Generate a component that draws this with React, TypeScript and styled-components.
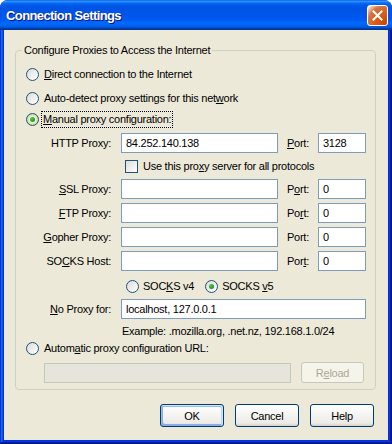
import React from 'react';
import styled, { createGlobalStyle, css } from 'styled-components';

const Global = createGlobalStyle`
  html, body { margin: 0; padding: 0; background: #ffffff; }
  body { font-family: "Liberation Sans", Arial, sans-serif; font-size: 11px; letter-spacing: -0.25px; color: #000; }
  * { box-sizing: border-box; }
`;

const Window = styled.div`
  width: 392px;
  height: 444px;
  display: flex;
  flex-direction: column;
  background: #0831d9;
  border-radius: 8px 8px 0 0;
  overflow: hidden;
`;

const TitleBar = styled.div`
  height: 30px;
  flex: none;
  display: flex;
  align-items: center;
  justify-content: space-between;
  padding: 0 4px 0 6px;
  background: linear-gradient(180deg, #0058ee 0%, #3a93ff 4%, #288eff 6%, #127dff 8%, #036ffc 10%, #0262ee 14%, #0057e5 20%, #0054e3 24%, #0055eb 56%, #005bf5 66%, #026afe 76%, #0062ef 86%, #0052d6 92%, #0040ab 94%, #003092 100%);
`;

const Title = styled.span`
  color: #fff;
  font-family: "Liberation Sans", Arial, sans-serif;
  font-weight: bold;
  font-size: 13px;
  letter-spacing: -0.6px;
  text-shadow: 1px 1px #0f1089;
`;

const CloseButton = styled.div`
  width: 21px;
  height: 21px;
  margin-top: 1px;
  border: 1px solid #fff;
  border-radius: 3px;
  display: flex;
  align-items: center;
  justify-content: center;
  background: radial-gradient(circle at 90% 90%, #cc4600 0%, #dc6527 55%, #cd7546 70%, #ffccb2 90%, #fff 100%);
`;

const Frame = styled.div`
  flex: 1;
  display: flex;
  padding: 0 4px 4px 4px;
  box-shadow: inset -1px -1px #00138c, inset 1px 0 #0831d9, inset -2px -2px #001ea0, inset 2px 0 #166aee, inset -3px -3px #003bda, inset 3px 0 #0855dd;
`;

const Body = styled.div`
  flex: 1;
  display: flex;
  flex-direction: column;
  background: #ece9d8;
  padding: 14px 12px 0 11px;
`;

const GroupBox = styled.fieldset`
  margin: 0;
  padding: 0 9px 6px 10px;
  border: 1px solid #d0d0bf;
  border-radius: 4px;
  min-width: 0;
`;

const Legend = styled.legend`
  margin-left: -4px;
  padding: 0 2px;
  line-height: 13px;
`;

const OptionRow = styled.div<{ $mt: number }>`
  height: 18px;
  display: flex;
  align-items: center;
  margin-top: ${p => p.$mt}px;
`;

const RadioLabel = styled.label<{ $gap?: number }>`
  display: inline-flex;
  align-items: center;
  gap: ${p => p.$gap ?? 5}px;
  white-space: nowrap;
`;

const LabelText = styled.span<{ $focus?: boolean }>`
  line-height: 13px;
  ${p => p.$focus && css`
    outline: 1px dotted #000;
    outline-offset: 1px;
  `}
`;

const RadioCircle = styled.span<{ $checked?: boolean; $hot?: boolean }>`
  width: 13px;
  height: 13px;
  flex: none;
  border-radius: 50%;
  border: 1px solid #1c5180;
  display: inline-flex;
  align-items: center;
  justify-content: center;
  background: linear-gradient(135deg, #dcdcd7 0%, #fff 100%);
  ${p => p.$hot && css`
    background: radial-gradient(circle, #fff 0%, #fff 30%, #d6e8a8 55%, #b9d27a 100%);
  `}
  ${p => p.$checked && css`
    &::after {
      content: '';
      width: 5px;
      height: 5px;
      border-radius: 50%;
      background: radial-gradient(circle at 35% 35%, #64c05a 0%, #21a121 60%, #177e17 100%);
    }
  `}
`;

const CheckBox = styled.span`
  width: 13px;
  height: 13px;
  flex: none;
  border: 1px solid #1c5180;
  background: linear-gradient(135deg, #dcdcd7 0%, #fff 100%);
`;

const ProxyGrid = styled.div`
  margin-top: 5px;
  display: grid;
  grid-template-columns: 95px 157px 40px 48px;
  row-gap: 4px;
  align-items: center;
`;

const FieldLabel = styled.label`
  text-align: right;
  padding-right: 10px;
  white-space: nowrap;
`;

const PortLabel = styled.label`
  padding-left: 9px;
  white-space: nowrap;
`;

const TextBox = styled.input`
  width: 100%;
  height: 20px;
  margin: 0;
  padding: 0 4px;
  border: 1px solid #7f9db9;
  border-radius: 0;
  background: #fff;
  font-family: "Liberation Sans", Arial, sans-serif;
  font-size: 11px;
  letter-spacing: -0.25px;
  color: #000;
  outline: none;
  &:disabled {
    background: #e6e5dc;
    border-color: #c9c7ba;
  }
`;

const SpanCell = styled.div<{ $pl?: number; $pt?: number; $h?: number; $gap?: number }>`
  grid-column: 2 / 5;
  height: ${p => p.$h ?? 20}px;
  display: flex;
  align-items: center;
  gap: ${p => p.$gap ?? 5}px;
  padding-left: ${p => p.$pl ?? 0}px;
  padding-top: ${p => p.$pt ?? 0}px;
  white-space: nowrap;
`;

const UrlRow = styled.div`
  margin-top: 5px;
  padding-left: 18px;
  display: flex;
  align-items: center;
  gap: 10px;
`;

const UrlBox = styled(TextBox)`
  width: 247px;
`;

const Button = styled.button<{ $default?: boolean; $w?: number; $h?: number }>`
  width: ${p => p.$w ?? 64}px;
  height: ${p => p.$h ?? 23}px;
  margin: 0;
  padding: 0;
  font-family: "Liberation Sans", Arial, sans-serif;
  font-size: 11px;
  letter-spacing: -0.25px;
  color: #000;
  border: 1px solid #003c74;
  border-radius: 3px;
  background: linear-gradient(180deg, #fff, #ecebe6 86%, #d6d0c5);
  ${p => p.$default && css`
    box-shadow: inset -1px 1px #cee7ff, inset 1px 2px #98b8ea, inset -2px 2px #bcd4f6, inset 1px -1px #89ade4, inset 2px -2px #89ade4;
  `}
  &:disabled {
    color: #aca899;
    border-color: #c9c7ba;
    background: #f5f4ea;
  }
`;

const ButtonRow = styled.div`
  margin-top: 14px;
  padding-right: 2px;
  display: flex;
  justify-content: flex-end;
  gap: 11px;
`;

const Radio = ({ checked, hot, focus, gap, children }: { checked?: boolean; hot?: boolean; focus?: boolean; gap?: number; children: React.ReactNode }) => (
  <RadioLabel $gap={gap}>
    <RadioCircle $checked={checked} $hot={hot} />
    <LabelText $focus={focus}>{children}</LabelText>
  </RadioLabel>
);

const proxies: { label: React.ReactNode; port: React.ReactNode; host: string; portValue: string }[] = [
  { label: <><u>S</u>SL Proxy:</>, port: <>P<u>o</u>rt:</>, host: '', portValue: '0' },
  { label: <><u>F</u>TP Proxy:</>, port: <>Po<u>r</u>t:</>, host: '', portValue: '0' },
  { label: <><u>G</u>opher Proxy:</>, port: <>Port:</>, host: '', portValue: '0' },
  { label: <>SO<u>C</u>KS Host:</>, port: <>Por<u>t</u>:</>, host: '', portValue: '0' },
];

export default function App() {
  return (
    <>
      <Global />
      <Window>
        <TitleBar>
          <Title>Connection Settings</Title>
          <CloseButton>
            <svg width="13" height="13" viewBox="0 0 13 13">
              <path d="M2.5 2.5 L10.5 10.5 M10.5 2.5 L2.5 10.5" stroke="#fff" strokeWidth="2" strokeLinecap="square" />
            </svg>
          </CloseButton>
        </TitleBar>
        <Frame>
          <Body>
            <GroupBox>
              <Legend>Configure Proxies to Access the Internet</Legend>
              <OptionRow $mt={8}>
                <Radio><u>D</u>irect connection to the Internet</Radio>
              </OptionRow>
              <OptionRow $mt={6}>
                <Radio>Auto-detect proxy settings for this net<u>w</u>ork</Radio>
              </OptionRow>
              <OptionRow $mt={3}>
                <Radio checked hot focus gap={4}><u>M</u>anual proxy configuration:</Radio>
              </OptionRow>
              <ProxyGrid>
                <FieldLabel>HTTP Proxy:</FieldLabel>
                <TextBox defaultValue="84.252.140.138" />
                <PortLabel><u>P</u>ort:</PortLabel>
                <TextBox defaultValue="3128" />
                <SpanCell $pl={4} $h={18}>
                  <CheckBox />
                  <span>Use this pro<u>x</u>y server for all protocols</span>
                </SpanCell>
                {proxies.map((p, i) => (
                  <React.Fragment key={i}>
                    <FieldLabel>{p.label}</FieldLabel>
                    <TextBox defaultValue={p.host} />
                    <PortLabel>{p.port}</PortLabel>
                    <TextBox defaultValue={p.portValue} />
                  </React.Fragment>
                ))}
                <SpanCell $pl={5} $pt={2} $gap={11}>
                  <Radio gap={4}>SOC<u>K</u>S v4</Radio>
                  <Radio checked gap={4}>SOCKS <u>v</u>5</Radio>
                </SpanCell>
                <FieldLabel><u>N</u>o Proxy for:</FieldLabel>
                <SpanCell>
                  <TextBox defaultValue="localhost, 127.0.0.1" />
                </SpanCell>
                <SpanCell $pl={1} $h={16}>
                  Example: .mozilla.org, .net.nz, 192.168.1.0/24
                </SpanCell>
              </ProxyGrid>
              <OptionRow $mt={0}>
                <Radio>Autom<u>a</u>tic proxy configuration URL:</Radio>
              </OptionRow>
              <UrlRow>
                <UrlBox disabled defaultValue="" />
                <Button disabled $w={63} $h={21}>R<u>e</u>load</Button>
              </UrlRow>
            </GroupBox>
            <ButtonRow>
              <Button $default>OK</Button>
              <Button>Cancel</Button>
              <Button>Help</Button>
            </ButtonRow>
          </Body>
        </Frame>
      </Window>
    </>
  );
}
